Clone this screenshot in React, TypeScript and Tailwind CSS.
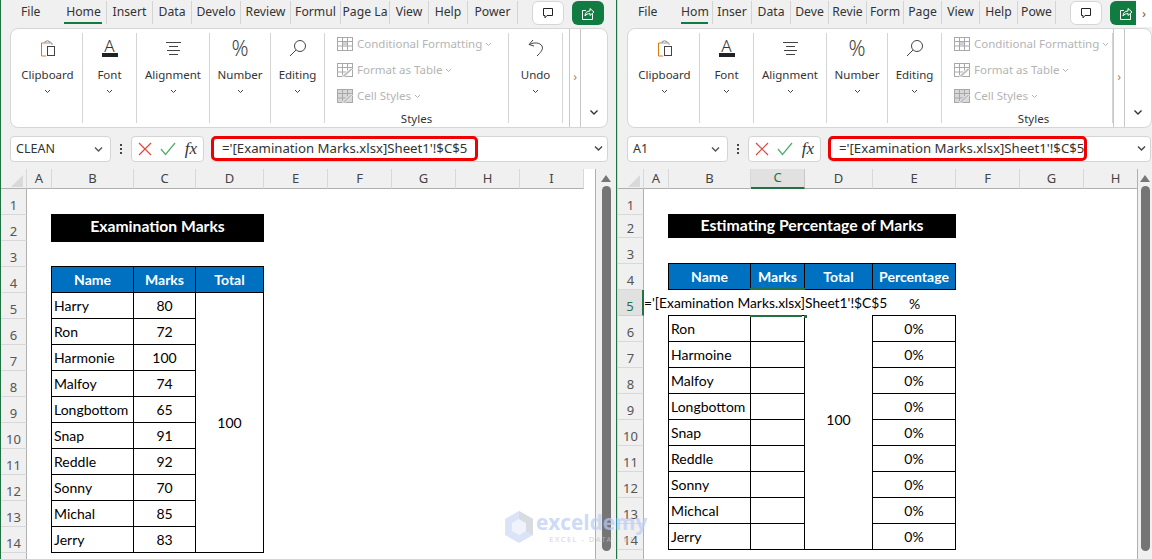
import React from 'react';

const ui = "font-['Noto_Sans',sans-serif]";
const cellFont = "font-['Lato',sans-serif]";

type Tab = { label: string; width: string; active?: boolean };

const leftTabs: Tab[] = [
  { label: 'File', width: 'w-[60px]' },
  { label: 'Home', width: 'w-[46px]', active: true },
  { label: 'Insert', width: 'w-[46px]' },
  { label: 'Data', width: 'w-[39px]' },
  { label: 'Develo', width: 'w-[49px]' },
  { label: 'Review', width: 'w-[50px]' },
  { label: 'Formul', width: 'w-[50px]' },
  { label: 'Page La', width: 'w-[49px]' },
  { label: 'View', width: 'w-[39px]' },
  { label: 'Help', width: 'w-[39px]' },
  { label: 'Power', width: 'w-[50px]' },
];

const rightTabs: Tab[] = [
  { label: 'File', width: 'w-[60px]' },
  { label: 'Hom', width: 'w-[35px]', active: true },
  { label: 'Inser', width: 'w-[39px]' },
  { label: 'Data', width: 'w-[39px]' },
  { label: 'Deve', width: 'w-[38px]' },
  { label: 'Revie', width: 'w-[38px]' },
  { label: 'Form', width: 'w-[37px]' },
  { label: 'Page', width: 'w-[38px]' },
  { label: 'View', width: 'w-[38px]' },
  { label: 'Help', width: 'w-[38px]' },
  { label: 'Powe', width: 'w-[38px]' },
];

const leftMarks = [
  ['Harry', '80'],
  ['Ron', '72'],
  ['Harmonie', '100'],
  ['Malfoy', '74'],
  ['Longbottom', '65'],
  ['Snap', '91'],
  ['Reddle', '92'],
  ['Sonny', '70'],
  ['Michal', '85'],
  ['Jerry', '83'],
];

const rightNames = ['Ron', 'Harmoine', 'Malfoy', 'Longbottom', 'Snap', 'Reddle', 'Sonny', 'Michcal', 'Jerry'];

const rowNumbers = [1, 2, 3, 4, 5, 6, 7, 8, 9, 10, 11, 12, 13, 14, 15];

function Chevron({ className = 'w-[7px] h-[5px] text-[#444]' }: { className?: string }) {
  return (
    <svg viewBox="0 0 7 5" className={className} fill="none" stroke="currentColor" strokeWidth="1">
      <path d="M1 1l2.5 2.5L6 1" />
    </svg>
  );
}

function ClipboardIcon() {
  return (
    <svg viewBox="0 0 16 17" className="w-4 h-[17px]" fill="none">
      <path d="M5 3H1.500v13H6" stroke="#d97a10" strokeWidth="1" />
      <path d="M5 3V1.500h1.500V.8h2v.7H10V3H5zM10 3h2v2" stroke="#999" strokeWidth="1" />
      <rect x="7.500" y="6.500" width="7" height="9" fill="#fff" stroke="#444" />
    </svg>
  );
}

function AlignIcon() {
  return (
    <svg viewBox="0 0 15 15" className="w-[15px] h-[15px]" stroke="#444" strokeWidth="1">
      <path d="M0 1.500h15M3 5.500h9M1 9.500h13M3 13.500h9" />
    </svg>
  );
}

function SearchIcon() {
  return (
    <svg viewBox="0 0 18 18" className="w-[18px] h-[18px]" fill="none" stroke="#444" strokeWidth="1">
      <circle cx="11" cy="7" r="5.500" />
      <path d="M7 11l-6 6" />
    </svg>
  );
}

function UndoIcon() {
  return (
    <svg viewBox="0 0 16 18" className="w-4 h-[18px]" fill="none" stroke="#444" strokeWidth="1">
      <path d="M5 1L1 5.500l5 1.500M1.500 5.500C6 3 12 3.500 14 7c1.500 3-1 5.500-2.500 7.500L9 17" />
    </svg>
  );
}

function CondIcon() {
  return (
    <svg viewBox="0 0 16 14" className="w-4 h-[14px]" fill="none" stroke="#a8a8a8" strokeWidth="1">
      <rect x=".5" y=".5" width="15" height="13" />
      <path d="M.5 4.500h15M.5 9h15M5.500.5v13M10.500.5v13" />
      <rect x="6" y="5" width="4" height="4" fill="#d0d0d0" stroke="none" />
    </svg>
  );
}

function TableIcon({ filled }: { filled?: boolean }) {
  return (
    <svg viewBox="0 0 16 14" className="w-4 h-[14px]" fill="none" stroke="#a8a8a8" strokeWidth="1">
      <rect x=".5" y=".5" width="15" height="13" fill={filled ? '#d8d8d8' : 'none'} />
      <path d="M.5 4.500h15M.5 9h9M5.500.5v13M10.500.5v7" />
      <path d="M5 13l9-8 1.500 1.500-8 7.500z" fill="#bcbcbc" stroke="#fff" strokeWidth=".6" />
    </svg>
  );
}

function CommentIcon() {
  return (
    <svg viewBox="0 0 12 12" className="w-3 h-3" fill="none" stroke="#222" strokeWidth="1">
      <path d="M1.500 1.500h9v7H5L3 10.800V8.500H1.500z" />
    </svg>
  );
}

function ShareIcon() {
  return (
    <svg viewBox="0 0 14 14" className="w-3.5 h-3.5" fill="none" stroke="#fff" strokeWidth="1">
      <path d="M11.500 8v5.500h-10v-9H5" />
      <path d="M4 10c0-3 2-5 5-5V2.500L13 6 9 9.500V7.500C7 7.500 5 8.500 4 10z" />
    </svg>
  );
}

function Group({ label, icon, className }: { label: string; icon: React.ReactNode; className: string }) {
  return (
    <div className={`${className} my-[4px] flex flex-col items-center border-r border-[#d4d4d4] shrink-0`}>
      <div className="mt-[3px] flex h-[24px] items-center justify-center">{icon}</div>
      <div className="mt-[6px] h-[18px] text-[11.500px] leading-[18px] text-[#333]">{label}</div>
      <div className="mt-[4px] flex h-[6px] items-center">
        <Chevron />
      </div>
    </div>
  );
}

function StyleRow({ icon, label }: { icon: React.ReactNode; label: string }) {
  return (
    <div className="flex h-[26px] items-center">
      <span className="w-[20px] shrink-0">{icon}</span>
      <span className="whitespace-nowrap text-[11.500px] text-[#b4b4b4]">{label}</span>
      <Chevron className="ml-[3px] w-[7px] h-[5px] text-[#b4b4b4]" />
    </div>
  );
}

function Ribbon({ withUndo, cardWidth, stylesWidth }: { withUndo: boolean; cardWidth: string; stylesWidth: string }) {
  return (
    <div className={`${cardWidth} ml-[9px] flex h-[100px] overflow-hidden rounded-l-lg rounded-r-lg border border-[#d6d6d6] bg-white shrink-0`}>
      <Group className="w-[72px] pl-[2px]" label="Clipboard" icon={<ClipboardIcon />} />
      <Group
        className="w-[54px]"
        label="Font"
        icon={
          <div className="flex w-4 flex-col items-center">
            <span className="text-[17px] font-light leading-[14px] text-[#333]">A</span>
            <span className="h-[4px] w-4 bg-[#222]" />
          </div>
        }
      />
      <Group className="w-[73px]" label="Alignment" icon={<AlignIcon />} />
      <Group className="w-[61px]" label="Number" icon={<span className="text-[21px] font-light leading-none text-[#444]">%</span>} />
      <Group className="w-[54px]" label="Editing" icon={<SearchIcon />} />
      <div className={`${stylesWidth} my-[4px] border-r border-[#d4d4d4] shrink-0 overflow-x-clip`}>
        <div className="flex w-[183px] flex-col">
          <div className="-mt-[2px] flex flex-col pl-[12px]">
            <StyleRow icon={<CondIcon />} label="Conditional Formatting" />
            <StyleRow icon={<TableIcon />} label="Format as Table" />
            <StyleRow icon={<TableIcon filled />} label="Cell Styles" />
          </div>
          <div className="mt-[4px] text-center text-[11.500px] leading-[12px] text-[#333]">Styles</div>
        </div>
      </div>
      {withUndo && (
        <>
          <Group className="w-[54px]" label="Undo" icon={<UndoIcon />} />
          <div className="w-[6px] shrink-0" />
        </>
      )}
      <div className="flex w-[12px] shrink-0 items-center justify-center border-x border-[#c8c8c8]">
        <span className="mt-[-2px] text-[12px] leading-none text-[#888]">›</span>
      </div>
      <div className="flex flex-1 items-end justify-center pb-[11px]">
        <Chevron className="w-[10px] h-[7px] text-[#333]" />
      </div>
    </div>
  );
}

function XMark() {
  return (
    <svg viewBox="0 0 14 14" className="w-3.5 h-3.5" stroke="#e0483e" strokeWidth="1.200">
      <path d="M1 1l12 12M13 1L1 13" />
    </svg>
  );
}

function CheckMark() {
  return (
    <svg viewBox="0 0 16 14" className="w-4 h-3.5" fill="none" stroke="#4caf6a" strokeWidth="1.200">
      <path d="M1 7l4.500 5.500L15 1" />
    </svg>
  );
}

function FormulaBar({ name, redWidth, barWidth }: { name: string; redWidth: string; barWidth: string }) {
  return (
    <div className="mt-[8px] flex h-[26px] shrink-0 items-stretch pl-[9px] text-[#333]">
      <div className="flex w-[101px] items-center justify-between rounded border border-[#d4d4d4] bg-white pl-[5px] pr-[6px] pt-px text-[12.500px]">
        <span>{name}</span>
        <Chevron className="w-[11px] h-[7px] text-[#555]" />
      </div>
      <div className="flex w-[20px] flex-col items-center justify-center gap-[2px]">
        <span className="h-[2px] w-[2px] bg-[#444]" />
        <span className="h-[2px] w-[2px] bg-[#444]" />
        <span className="h-[2px] w-[2px] bg-[#444]" />
      </div>
      <div className="flex w-[73px] items-center justify-between rounded border border-[#d4d4d4] bg-white px-[6px]">
        <XMark />
        <CheckMark />
        <span className="font-['Liberation_Serif',serif] text-[17px] italic text-[#333]">fx</span>
      </div>
      <div className={`${barWidth} relative ml-[7px] flex items-center rounded border border-[#d4d4d4] bg-white text-[13.200px]`}>
        <span className="pl-[10px] whitespace-nowrap">='[Examination Marks.xlsx]Sheet1'!$C$5</span>
        <div className={`${redWidth} absolute -left-[1px] -top-[1px] bottom-0 rounded-[5px] border-[3px] border-[#f00000]`} />
        <Chevron className="absolute right-[3px] top-[8px] w-[11px] h-[7px] text-[#444]" />
      </div>
    </div>
  );
}

function ColHead({ label, selected }: { label: string; selected?: boolean }) {
  return (
    <div
      className={
        selected
          ? 'flex items-center justify-center border-b-2 border-r border-b-[#217346] border-r-[#c8c8c8] bg-[#e1e1e1] text-[13px] text-[#217346]'
          : 'flex items-center justify-center border-b border-r border-b-[#b0b0b0] border-r-[#d8d8d8] bg-[#f0f0f0] text-[13px] text-[#444]'
      }
    >
      {label}
    </div>
  );
}

function RowHeads({ selected }: { selected?: number }) {
  return (
    <>
      {rowNumbers.map((n) => (
        <div
          key={n}
          className={
            n === selected
              ? 'col-start-1 flex items-end justify-center border-b border-r-2 border-b-[#d0d0d0] border-r-[#217346] bg-[#e1e1e1] pb-[1px] text-[13px] leading-[16px] text-[#217346]'
              : 'col-start-1 flex items-end justify-center border-b border-r border-b-[#d8d8d8] border-r-[#b0b0b0] bg-[#f0f0f0] pb-[1px] text-[13px] leading-[16px] text-[#555]'
          }
        >
          {n}
        </div>
      ))}
    </>
  );
}

function Corner() {
  return (
    <div className="col-start-1 row-start-1 flex items-end justify-end border-b border-r border-b-[#b0b0b0] border-r-[#d8d8d8] bg-[#f0f0f0] pb-[1px] pr-[3px]">
      <svg viewBox="0 0 12 12" className="w-3 h-3">
        <path d="M12 0v12H0z" fill="#d9d9d9" />
      </svg>
    </div>
  );
}

function Scrollbar({ className }: { className: string }) {
  return (
    <div className={`${className} flex shrink-0 flex-col items-center bg-[#f0f0f0]`}>
      <svg viewBox="0 0 10 7" className="mt-[6px] w-[10px] h-[7px]">
        <path d="M5 0l5 7H0z" fill="#777" />
      </svg>
      <div className="mt-[4px] h-[365px] w-[9px] rounded-full bg-[#757575]" />
    </div>
  );
}

function LeftSheet() {
  const c = `${cellFont} flex items-center border border-black -ml-px -mt-px text-[14px] text-black`;
  const head = `${cellFont} flex items-center justify-center border border-black -ml-px -mt-px bg-[#0070c0] text-[14px] font-bold text-white`;
  return (
    <div className="grid h-full flex-1 grid-cols-[26px_25px_82px_62px_68px_64px_64px_64px_64px_64px] grid-rows-[20px_repeat(15,26px)] overflow-hidden border-r border-[#b0b0b0] bg-white">
      <Corner />
      {['A', 'B', 'C', 'D', 'E', 'F', 'G', 'H', 'I'].map((l) => (
        <ColHead key={l} label={l} />
      ))}
      <RowHeads />
      <div className={`${cellFont} col-start-3 col-span-3 row-start-3 -ml-px -mt-px mb-[-1px] flex items-center justify-center bg-black pb-[2px] text-[15.700px] font-bold text-white`}>
        Examination Marks
      </div>
      <div className="col-start-3 col-span-3 row-start-5 row-span-11 grid grid-cols-subgrid grid-rows-subgrid">
        <div className={head}>Name</div>
        <div className={head}>Marks</div>
        <div className={head}>Total</div>
        <div className={`${c} col-start-3 row-start-2 row-span-10 justify-center`}>100</div>
        {leftMarks.map(([name, mark]) => (
          <React.Fragment key={name}>
            <div className={`${c} col-start-1 pl-[2px]`}>{name}</div>
            <div className={`${c} col-start-2 justify-center`}>{mark}</div>
          </React.Fragment>
        ))}
      </div>
    </div>
  );
}

function RightSheet() {
  const c = `${cellFont} flex items-center border border-black -ml-px -mt-px text-[14px] text-black`;
  const head = `${cellFont} flex items-center justify-center border border-black -ml-px -mt-px bg-[#0070c0] text-[14px] font-bold text-white`;
  return (
    <div className="grid h-full flex-1 grid-cols-[26px_25px_82px_54px_68px_83px_64px_64px_64px] grid-rows-[20px_26px_23px_repeat(13,26px)] overflow-hidden border-r border-[#b0b0b0] bg-white">
      <Corner />
      <ColHead label="A" />
      <ColHead label="B" />
      <ColHead label="C" selected />
      <ColHead label="D" />
      <ColHead label="E" />
      <ColHead label="F" />
      <ColHead label="G" />
      <ColHead label="H" />
      <RowHeads selected={5} />
      <div className={`${cellFont} col-start-3 col-span-4 row-start-3 -ml-px -mt-px flex items-center justify-center bg-black pb-[2px] text-[15.800px] font-bold text-white`}>
        Estimating Percentage of Marks
      </div>
      <div className="col-start-3 col-span-4 row-start-5 row-span-11 grid grid-cols-subgrid grid-rows-subgrid">
        <div className={head}>Name</div>
        <div className={head}>Marks</div>
        <div className={head}>Total</div>
        <div className={head}>Percentage</div>
        <div className="col-start-1 row-start-2" />
        <div className={`${cellFont} relative col-start-2 row-start-2 text-[14px] text-black`}>
          <span className="absolute -left-[107px] top-[3px] z-10 whitespace-nowrap text-[13.800px]">='[Examination Marks.xlsx]Sheet1'!$C$5</span>
          <div className="absolute -left-[1px] -top-[2px] h-[2px] w-[55px] bg-[#217346]" />
          <div className="absolute -bottom-[1px] -left-[1px] h-[2px] w-[52px] bg-[#217346]" />
          <div className="absolute -bottom-[2px] -right-[2px] h-[3px] w-[3px] bg-[#217346]" />
        </div>
        <div className={`${cellFont} col-start-3 row-start-2`} />
        <div className={`${cellFont} col-start-4 row-start-2 flex items-center justify-center text-[14px] text-black`}>%</div>
        <div className={`${c} col-start-3 row-start-3 row-span-9 justify-center border-t-0 pb-[26px]`}>100</div>
        {rightNames.map((name) => (
          <React.Fragment key={name}>
            <div className={`${c} col-start-1 pl-[2px]`}>{name}</div>
            <div className={`${c} col-start-2`} />
            <div className={`${c} col-start-4 justify-center`}>0%</div>
          </React.Fragment>
        ))}
      </div>
    </div>
  );
}

function TabRow({ tabs }: { tabs: Tab[] }) {
  return (
    <div className="flex h-[28px] shrink-0 items-start text-[12.200px] text-[#333]">
      {tabs.map((t, i) => (
        <div
          key={t.label}
          className={`${t.width} relative mt-[1px] flex h-[23px] shrink-0 items-center justify-center overflow-hidden whitespace-nowrap ${i > 0 ? 'border-r border-[#d4d4d4]' : 'pl-[20px] justify-start'}`}
        >
          <span>{t.label}</span>
          {t.active && <span className="absolute bottom-0 left-[3px] right-[4px] h-[2px] bg-[#107c41]" />}
        </div>
      ))}
      <button className="ml-[14px] mt-[1px] flex h-[24px] w-[32px] shrink-0 items-center justify-center rounded-md border border-[#d6d6d6] bg-white">
        <CommentIcon />
      </button>
      <button className="ml-[8px] mt-[1px] flex h-[24px] w-[32px] shrink-0 items-center justify-center rounded-md bg-[#107c41]">
        <ShareIcon />
      </button>
    </div>
  );
}

export default function App() {
  return (
    <div className={`${ui} relative flex h-[559px] w-[1152px] overflow-hidden bg-[#f0f0f0]`}>
      {/* left window */}
      <div className="flex h-full w-[617px] shrink-0 flex-col border-x border-[#217346]">
        <TabRow tabs={leftTabs} />
        <Ribbon withUndo cardWidth="w-[598px]" stylesWidth="w-[184px]" />
        <FormulaBar name="CLEAN" redWidth="w-[267px]" barWidth="w-[397px]" />
        <div className="mt-[7px] flex min-h-0 flex-1">
          <LeftSheet />
          <Scrollbar className="w-[20px]" />
        </div>
      </div>

      {/* right window */}
      <div className="relative flex h-full w-[535px] shrink-0 flex-col overflow-hidden border-l border-[#d4d4d4]">
        <TabRow tabs={rightTabs} />
        <div className="absolute right-0 top-0 flex h-[27px] w-[16px] items-center justify-center bg-white">
          <span className="text-[13px] leading-none text-[#666]">›</span>
        </div>
        <Ribbon withUndo={false} cardWidth="w-[525px]" stylesWidth="w-[171px]" />
        <FormulaBar name="A1" redWidth="w-[259px]" barWidth="w-[323px]" />
        <div className="mt-[7px] flex min-h-0 flex-1">
          <RightSheet />
          <Scrollbar className="w-[14px]" />
        </div>
      </div>

      {/* watermark */}
      <div className="pointer-events-none absolute left-[505px] top-[511px] flex items-start gap-[3px] opacity-70">
        <svg viewBox="0 0 28 32" className="w-[28px] h-[32px]">
          <path d="M14 0l14 8v16L14 32 0 24V8z" fill="#cbd8f5" />
          <path d="M14 8l7 4v8l-7 4-7-4v-8z" fill="#e8eefc" />
          <path d="M14 0l14 8v16l-7-4v-8l-7-4z" fill="#c8cdd6" />
        </svg>
        <div className="flex flex-col items-center">
          <span className="font-['Open_Sans',sans-serif] text-[20.800px] font-bold leading-[22px] text-[#bccdf3]">exceldemy</span>
          <span className="mt-[1px] text-[7.500px] leading-[10px] tracking-[1.500px] text-[#c4c4c4]">EXCEL - DATA - BI</span>
        </div>
      </div>
    </div>
  );
}
